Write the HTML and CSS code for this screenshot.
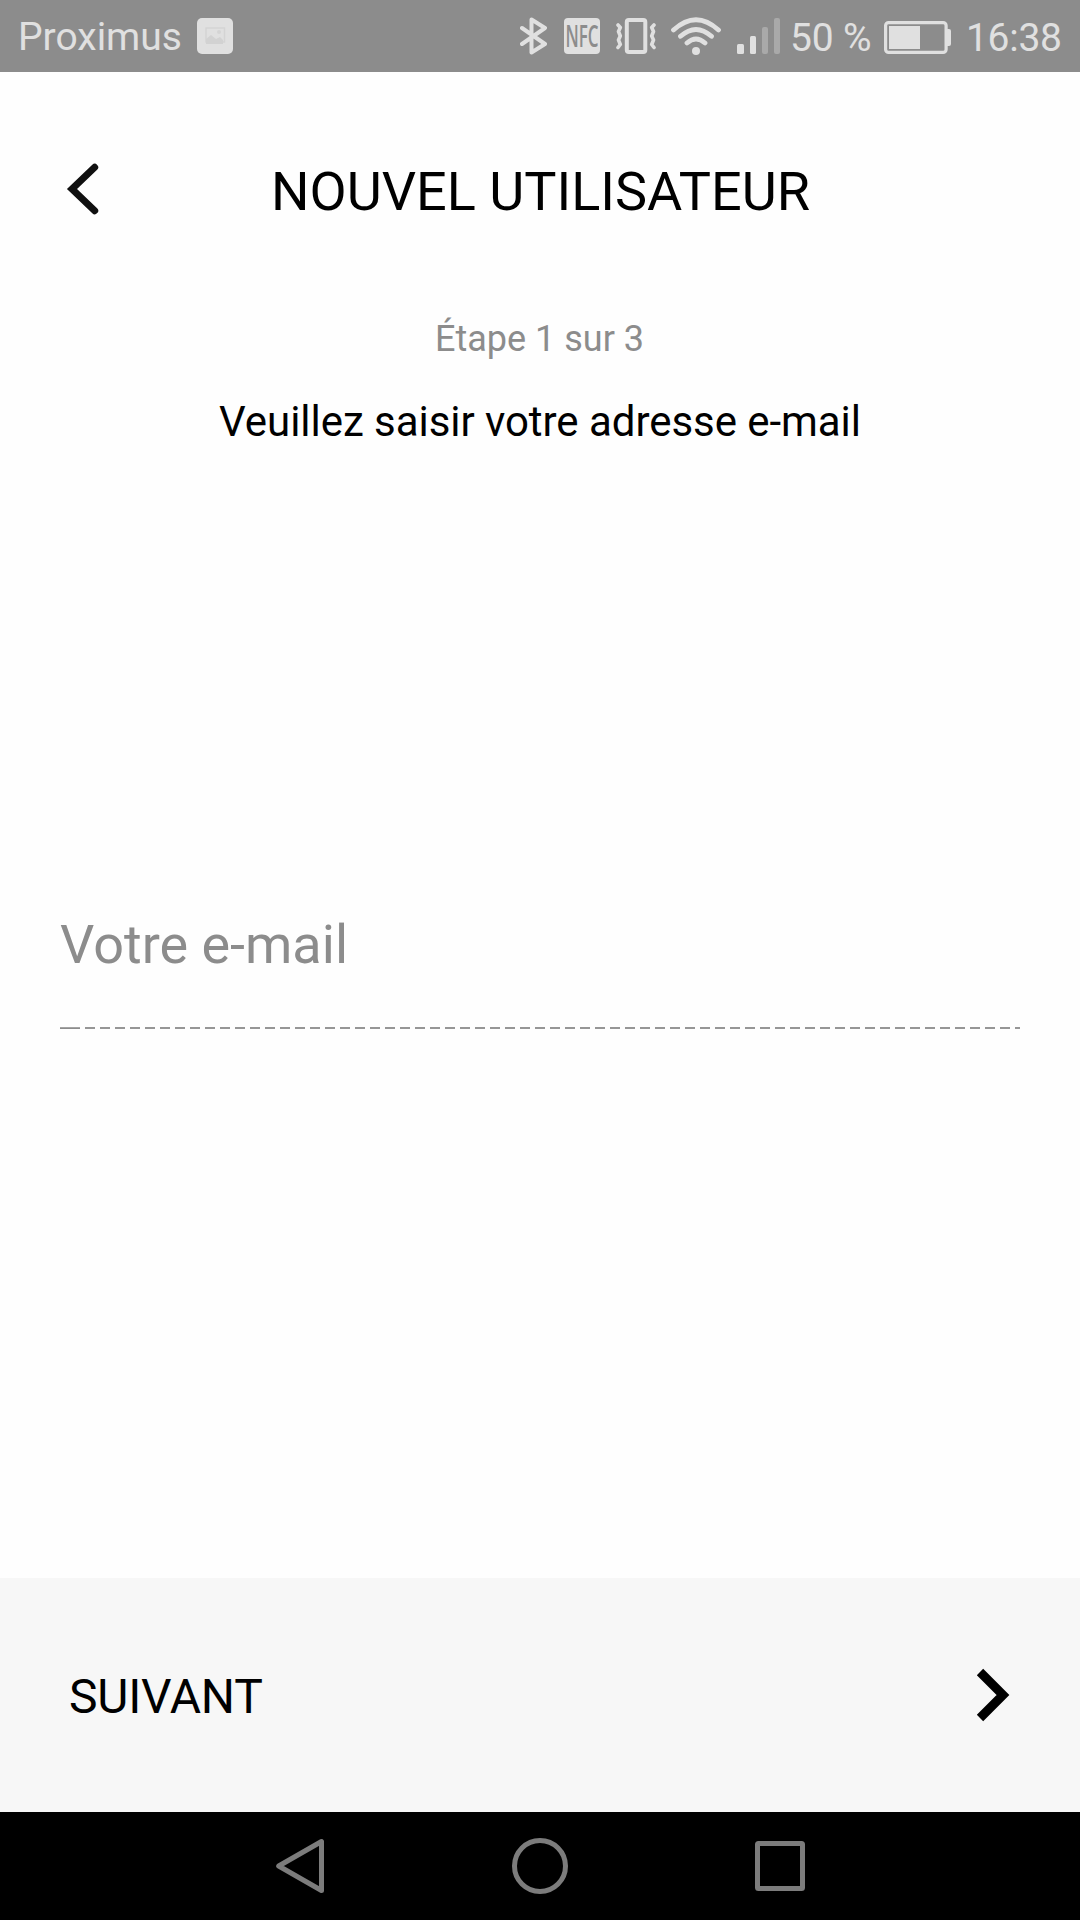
FILE: index.html
```
<!DOCTYPE html>
<html lang="fr">
    <head>
        <meta charset="utf-8">
        <title>Nouvel utilisateur</title>
        <link rel="stylesheet" href="styles.css">
    </head>
    <body>
        <div class="status-bar">
            <span class="carrier">Proximus</span>
            <svg class="icon-picture" viewBox="0 0 36 36">
                <rect width="36" height="36" rx="5" fill="#e0e0e0"/>
                <rect x="9" y="10" width="18.500" height="14" fill="none" stroke="#d4d4d4" stroke-width="1.500"/>
                <path d="M9 26v-5l5-4 5 4 4-2 3 3v4z" fill="#d2d2d2"/>
                <circle cx="22" cy="14" r="2" fill="#d4d4d4"/>
            </svg>
            <div class="status-right">
                <svg class="icon-bluetooth" viewBox="0 0 27 38">
                    <path d="M2 11L25 27L11.500 35.500V2.500L25 11L2 27" fill="none" stroke="#e0e0e0" stroke-width="4" stroke-linecap="round" stroke-linejoin="round"/>
                </svg>
                <svg class="icon-nfc" viewBox="0 0 36 36">
                    <rect width="36" height="36" rx="4" fill="#e0e0e0"/>
                    <text x="1.500" y="29" textLength="33" lengthAdjust="spacingAndGlyphs">NFC</text>
                </svg>
                <svg class="icon-vibrate" viewBox="0 0 40 36">
                    <g fill="none" stroke="#e0e0e0">
                        <rect x="10.800" y="2" width="18.500" height="32" rx="2" stroke-width="4"/>
                        <path d="M2 7L4.300 9.500L2.500 13.500L4.300 18L2.500 22L4.300 26.500L2 29.500M38 7L35.700 9.500L37.500 13.500L35.700 18L37.500 22L35.700 26.500L38 29.500" stroke-width="3.600" stroke-linecap="round" stroke-linejoin="round"/>
                    </g>
                </svg>
                <svg class="icon-wifi" viewBox="0 0 50 38">
                    <path d="M2.500 13Q25 -7.500 47.500 13M9.500 19.300Q25 5.500 40.500 19.300M16 26Q25 18 34 26" fill="none" stroke="#e0e0e0" stroke-width="4.800" stroke-linecap="round"/>
                    <circle cx="25" cy="34" r="4" fill="#e0e0e0"/>
                </svg>
                <svg class="icon-signal" viewBox="0 0 43 36">
                    <rect x="0" y="26" width="7" height="10" rx="1.500" fill="#e0e0e0"/>
                    <rect x="13" y="18" width="6" height="18" rx="1.500" fill="#e0e0e0"/>
                    <rect x="25" y="9" width="6" height="27" rx="2" fill="#a9a9a9"/>
                    <rect x="37" y="0" width="6" height="36" rx="2" fill="#a9a9a9"/>
                </svg>
                <span class="percent">50 %</span>
                <svg class="icon-battery" viewBox="0 0 67 33">
                    <rect x="1.600" y="1.600" width="60.500" height="29.800" rx="3" fill="none" stroke="#e0e0e0" stroke-width="3.200"/>
                    <rect x="5" y="5" width="31" height="23" fill="#e0e0e0"/>
                    <path d="M63 8h2q2 0 2 2v13q0 2-2 2h-2z" fill="#e0e0e0"/>
                </svg>
                <span class="time">16:38</span>
            </div>
        </div>

        <header class="header">
            <svg class="back" viewBox="0 0 34 52">
                <path d="M29.700 4.300L7 26L29.700 47.700" fill="none" stroke="#101010" stroke-width="7" stroke-linecap="round"/>
            </svg>
            <h1>NOUVEL UTILISATEUR</h1>
        </header>

        <main class="content">
            <p class="step">Étape 1 sur 3</p>
            <p class="prompt">Veuillez saisir votre adresse e-mail</p>
            <div class="field">Votre e-mail</div>
        </main>

        <div class="next">
            <span>SUIVANT</span>
            <svg class="forward" viewBox="0 0 34 54">
                <path d="M4 4L27 27L4 50" fill="none" stroke="#000" stroke-width="9"/>
            </svg>
        </div>

        <nav class="nav-bar">
            <svg viewBox="0 0 60 60">
                <path d="M8.700 30L51.500 5.500V54.500Z"/>
            </svg>
            <svg viewBox="0 0 60 60">
                <circle cx="30" cy="30" r="25.500"/>
            </svg>
            <svg viewBox="0 0 60 60">
                <rect x="7.500" y="7.500" width="45" height="45" rx="1"/>
            </svg>
        </nav>
    </body>
</html>
```
FILE: styles.css
```
* {
    box-sizing: border-box;
}
body {
    margin: 0;
    height: 1920px;
    display: flex;
    flex-direction: column;
    background: #fefefe;
    color: #000;
    font-family: Roboto, sans-serif;
    overflow: hidden;
}
svg {
    display: block;
    flex: none;
}
h1, p {
    margin: 0;
    font-weight: 400;
}

/* android status bar */
.status-bar {
    display: flex;
    align-items: center;
    height: 72px;
    padding-left: 18px;
    background: #8c8c8c;
    color: #e0e0e0;
    font-size: 39px;
    line-height: 46px;
    white-space: nowrap;
}
.carrier {
    width: 179px;
    padding-top: 2px;
}
.status-right {
    display: flex;
    align-items: center;
    margin-left: auto;
}
.icon-picture, .icon-nfc {
    width: 36px;
    height: 36px;
}
.icon-bluetooth {
    width: 27px;
    height: 38px;
}
.icon-nfc {
    margin-left: 17px;
    overflow: visible;
}
.icon-nfc text {
    font-family: "Open Sans", sans-serif;
    font-size: 30px;
    font-weight: 600;
    fill: #8c8c8c;
}
.icon-vibrate {
    width: 40px;
    height: 36px;
    margin-left: 16px;
}
.icon-wifi {
    width: 50px;
    height: 38px;
    margin-left: 15px;
}
.icon-signal {
    width: 43px;
    height: 36px;
    margin-left: 16px;
}
.percent {
    width: 94px;
    margin-left: 10px;
    padding-top: 4px;
    letter-spacing: -0.2px;
}
.icon-battery {
    width: 67px;
    height: 33px;
    margin-top: 3px;
}
.time {
    width: 114px;
    margin-left: 15px;
    padding-top: 4px;
    letter-spacing: -0.3px;
}

.header {
    display: grid;
    grid-template-columns: 65px 1fr 65px;
    align-items: center;
    height: 239px;
}
.back {
    width: 34px;
    height: 52px;
    margin: 0 0 5px 65px;
}
.header h1 {
    padding-left: 1px;
    font-size: 54px;
    line-height: 64px;
    text-align: center;
}

.content {
    flex: 1;
    padding: 0 60px;
}
.step {
    padding-right: 1px;
    color: #8c8c8c;
    font-size: 36px;
    line-height: 56px;
    text-align: center;
}
.prompt {
    margin-top: 27px;
    font-size: 42px;
    line-height: 56px;
    letter-spacing: -0.05px;
    text-align: center;
}
/* the first dash is longer than the others */
.field {
    height: 116px;
    margin-top: 463px;
    color: #8c8c8c;
    font-size: 54px;
    line-height: 64px;
    background:
        linear-gradient(#a4a4a4 50%, #8c8c8c 50%) 0 100% / 20px 2px no-repeat,
        repeating-linear-gradient(90deg, #969696 0 5px, transparent 5px 10px, #969696 10px 15px) 0 100% / 100% 2px no-repeat;
}

.next {
    display: flex;
    align-items: center;
    justify-content: space-between;
    height: 234px;
    padding: 0 70px 0 69px;
    background: #f7f7f7;
    font-size: 48px;
    letter-spacing: -0.2px;
}
.next span {
    padding-top: 3px;
}
.forward {
    width: 34px;
    height: 54px;
}

.nav-bar {
    display: flex;
    align-items: center;
    justify-content: center;
    gap: 180px;
    height: 108px;
    background: #000;
}
.nav-bar svg {
    width: 60px;
    height: 60px;
    fill: none;
    stroke: #7c7c7c;
    stroke-width: 5;
    stroke-linejoin: round;
}
```
